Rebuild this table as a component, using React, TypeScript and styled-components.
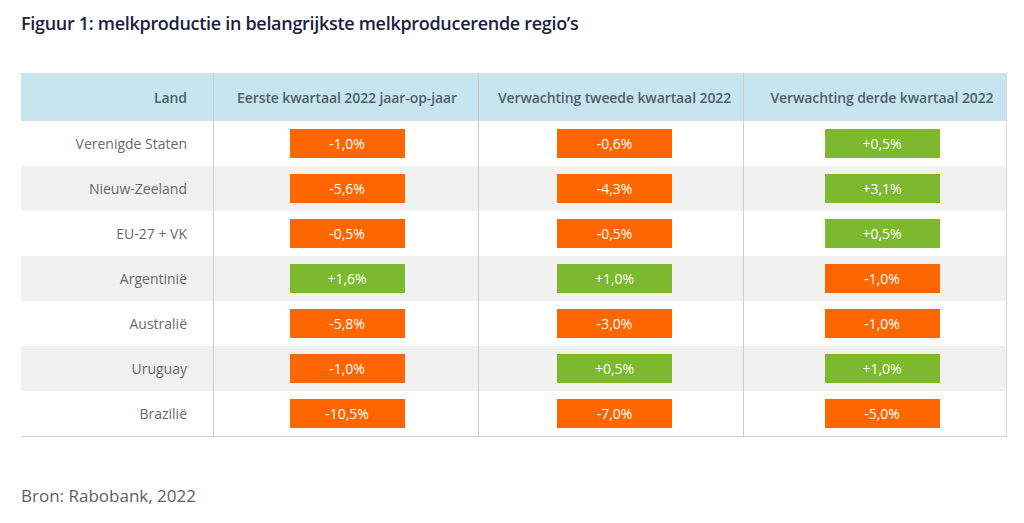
import React from "react";
import styled, {createGlobalStyle} from "styled-components";

const COLS = "192px 265px 265px 264px";

const GlobalStyle = createGlobalStyle`
  html, body {
    margin: 0;
    padding: 0;
    background: #ffffff;
  }
  body {
    font-family: "Open Sans", "Noto Sans", sans-serif;
  }
`;

const Page = styled.div`
  width: 1024px;
  height: 523px;
  padding: 0 17px 0 21px;
  box-sizing: border-box;
  display: flex;
  flex-direction: column;
`;

const Title = styled.h1`
  margin: 11px 0 0 0;
  font-size: 18px;
  line-height: 24px;
  font-weight: 600;
  color: #1c2140;
  letter-spacing: -0.3px;
`;

const Table = styled.div`
  margin-top: 38px;
  width: 986px;
  border-right: 1px solid #d6dadc;
  border-bottom: 1px solid #cfd3d5;
  box-sizing: border-box;
`;

interface RowProps {
    $shade: "head" | "white" | "gray";
}

const Row = styled.div<RowProps>`
  display: grid;
  grid-template-columns: ${COLS};
  height: ${p => p.$shade === "head" ? 48 : 45}px;
  background: ${p => p.$shade === "head" ? "#c6e5ee" : p.$shade === "gray" ? "#f1f1f1" : "#ffffff"};
`;

interface CellProps {
    $first?: boolean;
    $shift?: number;
}

const Cell = styled.div<CellProps>`
  display: flex;
  align-items: center;
  justify-content: ${p => p.$first ? "flex-end" : "center"};
  padding: ${p => p.$first ? "0 26px 0 0" : `0 0 0 ${p.$shift ?? 0}px`};
  border-left: ${p => p.$first ? "none" : "1px solid #c9ced1"};
  box-sizing: border-box;
`;

const HeadText = styled.span`
  font-size: 14px;
  font-weight: 600;
  color: #536068;
  letter-spacing: -0.1px;
`;

const LandText = styled.span`
  font-size: 14px;
  color: #666a6d;
`;

interface BadgeProps {
    $up: boolean;
}

const Badge = styled.div<BadgeProps>`
  width: 115px;
  height: 29px;
  display: flex;
  align-items: center;
  justify-content: center;
  background: ${p => p.$up ? "#7db92f" : "#ff6600"};
  color: #ffffff;
  font-size: 14px;
`;

const Source = styled.div`
  margin-top: 47px;
  font-size: 17px;
  line-height: 23px;
  color: #5c6064;
`;

// badges and headers sit a little right of the column centre
const SHIFTS = [2, 7, 13];

const headers = [
    "Eerste kwartaal 2022 jaar-op-jaar",
    "Verwachting tweede kwartaal 2022",
    "Verwachting derde kwartaal 2022",
];

const rows: [string, string, string, string][] = [
    ["Verenigde Staten", "-1,0%", "-0,6%", "+0,5%"],
    ["Nieuw-Zeeland", "-5,6%", "-4,3%", "+3,1%"],
    ["EU-27 + VK", "-0,5%", "-0,5%", "+0,5%"],
    ["Argentinië", "+1,6%", "+1,0%", "-1,0%"],
    ["Australië", "-5,8%", "-3,0%", "-1,0%"],
    ["Uruguay", "-1,0%", "+0,5%", "+1,0%"],
    ["Brazilië", "-10,5%", "-7,0%", "-5,0%"],
];

const App: React.FC = () => {
    return (
        <>
            <GlobalStyle/>
            <Page>
                <Title>Figuur 1: melkproductie in belangrijkste melkproducerende regio’s</Title>
                <Table>
                    <Row $shade="head">
                        <Cell $first><HeadText>Land</HeadText></Cell>
                        {headers.map((h, i) => (
                            <Cell key={h} $shift={SHIFTS[i]}><HeadText>{h}</HeadText></Cell>
                        ))}
                    </Row>
                    {rows.map(([land, ...vals], r) => (
                        <Row key={land} $shade={r % 2 === 1 ? "gray" : "white"}>
                            <Cell $first><LandText>{land}</LandText></Cell>
                            {vals.map((v, i) => (
                                <Cell key={i} $shift={SHIFTS[i]}>
                                    <Badge $up={v.startsWith("+")}>{v}</Badge>
                                </Cell>
                            ))}
                        </Row>
                    ))}
                </Table>
                <Source>Bron: Rabobank, 2022</Source>
            </Page>
        </>
    );
}

export default App;
